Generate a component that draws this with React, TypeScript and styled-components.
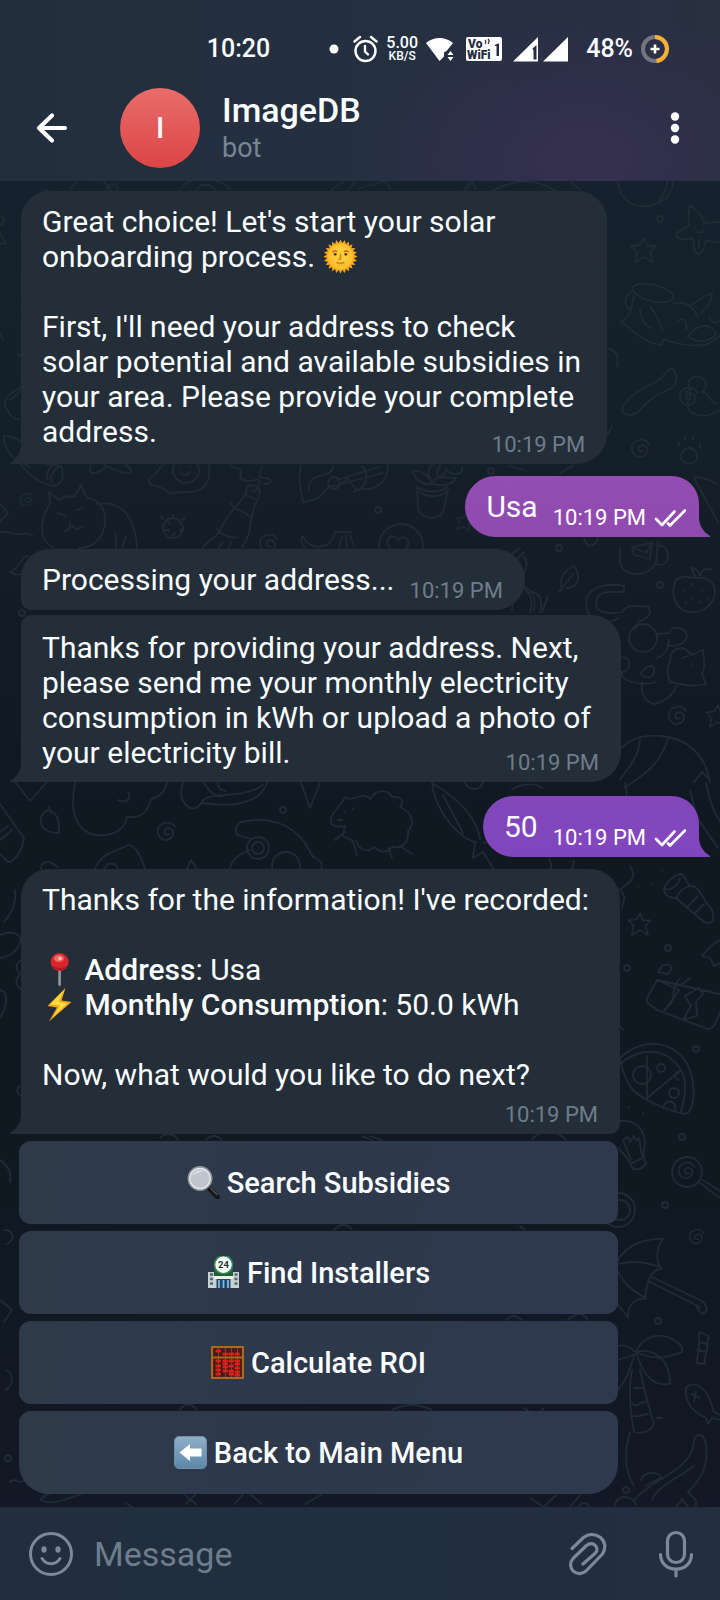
import React from 'react';
import styled, { createGlobalStyle, css } from 'styled-components';

const GlobalStyle = createGlobalStyle`
  * { box-sizing: border-box; }
  body {
    margin: 0;
    background: #111923;
    font-family: Roboto, "Liberation Sans", sans-serif;
    color: #fbfdff;
  }
  button, input { font: inherit; color: inherit; border: 0; background: none; padding: 0; margin: 0; }
  svg { display: block; }
`;

/* ---------- layout ---------- */

const Page = styled.div`
  min-height: 100vh;
  display: flex;
  flex-direction: column;
`;

const Header = styled.header`
  padding: 35px 35px 13px 35px;
  background:
    radial-gradient(230px 150px at 81% 88%, #37304f 0%, rgba(50, 47, 78, 0.75) 45%, rgba(44, 48, 70, 0) 100%),
    linear-gradient(90deg, #232e3c 0%, #243040 52%, #262f42 75%, #293040 100%);
`;

const StatusBar = styled.div`
  display: flex;
  align-items: center;
  justify-content: flex-end;
  height: 28px;
  padding-right: 16px;
  gap: 59px;
  font-size: 25px;
  line-height: 28px;
  font-weight: 500;
`;

const StatusIcons = styled.div`
  display: flex;
  align-items: center;
  gap: 18px;
`;

const StatusGroup = styled.div`
  display: flex;
  align-items: center;
  gap: 8px;
`;

const Speed = styled.div`
  display: flex;
  flex-direction: column;
  align-items: center;
  width: 32px;
  font-size: 16px;
  line-height: 14px;
  span { font-size: 12px; line-height: 12px; }
`;

const TitleRow = styled.div`
  display: flex;
  align-items: center;
  margin-top: 25px;
`;

const IconButton = styled.button`
  display: flex;
  cursor: pointer;
`;

const Avatar = styled.div`
  display: flex;
  align-items: center;
  justify-content: center;
  width: 80px;
  height: 80px;
  margin: 0 22px 0 51px;
  border-radius: 50%;
  background: linear-gradient(#e86d6b, #dd4545);
  font-size: 29px;
  font-weight: 500;
`;

const Title = styled.div`
  flex: 1;
  h1 { margin: 0; font-size: 34px; line-height: 40px; font-weight: 500; }
  p { margin: 0; font-size: 27px; line-height: 36px; color: #778595; }
`;

const Chat = styled.main`
  position: relative;
  flex: 1;
  display: flex;
  flex-direction: column;
  align-items: flex-start;
  padding: 10px 21px 13px 21px;
  overflow: hidden;
  background: linear-gradient(#15212c 0%, #131e29 25%, #101822 48%, #101922 75%, #121825 100%);
`;

const Wallpaper = styled.svg`
  position: absolute;
  inset: 0;
  width: 100%;
  height: 100%;
  fill: none;
  stroke: #202b36;
  stroke-width: 1.8;
  stroke-linecap: round;
  stroke-linejoin: round;
`;

type BubbleProps = {
  $out?: boolean;
  $color?: string;
  $corners: string;
  $gap?: number;
  $top?: number;
  $stamp: 'beside' | 'over' | 'below';
};

const Bubble = styled.div<BubbleProps>`
  position: relative;
  display: grid;
  grid-template-columns: ${p => (p.$stamp === 'beside' ? 'auto auto' : 'auto')};
  column-gap: 15px;
  width: fit-content;
  margin-top: ${p => p.$gap ?? 0}px;
  padding: ${p => p.$top ?? 13}px ${p => (p.$out ? 13 : 22)}px 6px 21px;
  border-radius: ${p => p.$corners};
  background: ${p => p.$color ?? '#232e39'};
  ${p => p.$out && css`align-self: flex-end;`}
`;

const Text = styled.p<{ $foot: number; $extra?: number }>`
  grid-area: 1 / 1;
  margin: 0;
  padding: 0 ${p => p.$extra ?? 0}px ${p => p.$foot}px 0;
  font-size: 30px;
  line-height: 35px;
  b { font-weight: 500; }
`;

const Stamp = styled.div<{ $out?: boolean; $stamp: 'beside' | 'over' | 'below' }>`
  grid-area: ${p => (p.$stamp === 'beside' ? '1 / 2' : p.$stamp === 'over' ? '1 / 1' : '2 / 1')};
  align-self: end;
  justify-self: end;
  display: flex;
  align-items: center;
  gap: 8px;
  font-size: 22px;
  line-height: 26px;
  color: ${p => (p.$out ? '#fff' : '#6f7d8a')};
`;

const Tail = styled.svg<{ $out?: boolean; $color?: string }>`
  position: absolute;
  bottom: 0;
  ${p => (p.$out ? 'left: 100%;' : 'right: 100%;')}
  width: 11px;
  height: 20px;
  fill: ${p => p.$color ?? '#232e39'};
  ${p => p.$out && css`transform: scaleX(-1);`}
`;

const Emoji = styled.svg<{ $size: number }>`
  display: inline-block;
  width: ${p => p.$size}px;
  height: ${p => p.$size}px;
  vertical-align: -7px;
`;

const LastMessage = styled.section`
  position: relative;
  width: fit-content;
  margin-top: 12px;
`;

const Keyboard = styled.div`
  display: flex;
  flex-direction: column;
  gap: 7px;
  margin: 7px 2px 0 -2px;
`;

const KeyButton = styled.button`
  display: flex;
  align-items: center;
  justify-content: center;
  gap: 7px;
  height: 83px;
  border-radius: 12px;
  background: linear-gradient(100deg, #2f3a49 0%, #2d394b 50%, #2e394d 100%);
  font-size: 29px;
  font-weight: 500;
  cursor: pointer;
  &:last-child { border-radius: 12px 12px 30px 30px; }
`;

const Composer = styled.form`
  display: flex;
  align-items: center;
  height: 93px;
  padding: 1px 26px 0 28px;
  background: linear-gradient(90deg, #222e3d 0%, #202e3f 40%, #232e3f 100%);
`;

const MessageInput = styled.input`
  flex: 1;
  min-width: 0;
  padding: 0 20px;
  outline: none;
  font-size: 34px;
  line-height: 40px;
  &::placeholder { color: #6e7d8d; opacity: 1; }
`;

const Tools = styled.div`
  display: flex;
  align-items: center;
  gap: 51px;
`;

/* ---------- icons ---------- */

const DotIcon = () => (
  <svg width="16" height="26" viewBox="0 0 16 26"><circle cx="5" cy="13" r="4.5" fill="#fff" /></svg>
);

const AlarmIcon = () => (
  <svg width="25" height="28" viewBox="0 0 25 28" fill="none" stroke="#fff" strokeWidth="2.4" strokeLinecap="round">
    <circle cx="12.5" cy="16" r="10" />
    <path d="M12 11v5.5l3 3M1.5 6.5l5.5-4.5M23.5 6.5L18 2" />
  </svg>
);

const WifiIcon = () => (
  <svg width="28" height="26" viewBox="0 0 28 26" fill="#fff">
    <path d="M0 7C4 3.5 9 2 13.5 2S23 3.500 27 7l-6 7.500-3 2v4L13.500 25z" />
    <path d="M24.500 15l3 4h-6zM24.500 25l3-4h-6z" />
  </svg>
);

const VoWifiIcon = () => (
  <svg width="40" height="26" viewBox="0 0 40 26" fontFamily="Roboto, sans-serif" fontWeight="900" fill="#262c40">
    <rect x="4" y="1" width="36" height="24" rx="2" fill="#fff" />
    <text x="6" y="12" fontSize="12">Vo</text>
    <text x="5" y="23" fontSize="12">WiFi</text>
    <path d="M23 8c1-1 1-3 0-4M26 8c1.500-2 1-4 0-5" fill="none" stroke="#262c40" strokeWidth="1.200" />
    <path d="M33 9l3-1.500h1V20h-2.500V10H33z" />
  </svg>
);

const SignalIcon = () => (
  <svg width="58" height="26" viewBox="0 0 58 26">
    <path d="M3 25.500L28 1v24.500zM33 25.500L58 1v24.500z" fill="#fff" />
    <path d="M22.500 12.500L26.500 9v14.500h-3V14.500z" fill="#262c40" />
  </svg>
);

const BatteryIcon = () => (
  <svg width="28" height="28" viewBox="0 0 28 28" fill="none" strokeWidth="4">
    <circle cx="14" cy="14" r="12" stroke="#73757f" />
    <path d="M14 2a12 12 0 0 1 1.500 23.900" stroke="#fbb034" />
    <path d="M14 9.500v9M9.500 14h9" stroke="#fff" strokeWidth="2.600" />
  </svg>
);

const BackIcon = () => (
  <svg width="34" height="32" viewBox="0 0 34 32" fill="none" stroke="#fff" strokeWidth="4.200" strokeLinecap="round" strokeLinejoin="round">
    <path d="M30 16H4M17 3.500L4 16l13 12.500" />
  </svg>
);

const MoreIcon = () => (
  <svg width="20" height="32" viewBox="0 0 20 32" fill="#fff">
    <circle cx="10" cy="4.500" r="4.200" /><circle cx="10" cy="16" r="4.200" /><circle cx="10" cy="27.500" r="4.200" />
  </svg>
);

const ChecksIcon = () => (
  <svg width="32" height="18" viewBox="0 0 32 18" fill="none" stroke="#fff" strokeWidth="2.600" strokeLinecap="round" strokeLinejoin="round">
    <path d="M2 10l6 6L20.500 2.500M14 14.500l2 2L31 1.500" />
  </svg>
);

const SmileIcon = () => (
  <svg width="46" height="46" viewBox="0 0 46 46" fill="none" stroke="#7b8998" strokeWidth="3" strokeLinecap="round">
    <circle cx="23" cy="23" r="20.500" />
    <path d="M14 27.500c4.500 7 13.500 7 18 0" />
    <ellipse cx="16" cy="18.500" rx="2.600" ry="3.200" fill="#7b8998" stroke="none" />
    <ellipse cx="30" cy="18.500" rx="2.600" ry="3.200" fill="#7b8998" stroke="none" />
  </svg>
);

const ClipIcon = () => (
  <svg width="38" height="44" viewBox="0 0 38 44" fill="none" stroke="#7b8998" strokeWidth="3.200" strokeLinecap="round" strokeLinejoin="round">
    <path d="M3 16.500L14.500 5.500C25-3 42 8 33.500 22L18 38C8 48-4 35 4.500 26L17.500 13.500C24 8 31 16 26.500 21L14 32" />
  </svg>
);

const MicIcon = () => (
  <svg width="36" height="48" viewBox="0 0 36 48" fill="none" stroke="#7b8998" strokeWidth="3.200" strokeLinecap="round">
    <rect x="9.500" y="2.500" width="17" height="30" rx="8.500" />
    <path d="M2.500 24.500c0 19.500 31 19.500 31 0M18 39.500V46" />
  </svg>
);

/* ---------- emoji ---------- */

const rays = Array.from({ length: 48 }, (_, i) => {
  const r = i % 2 ? 14 : 17.5;
  const a = (i * Math.PI) / 24;
  return `${(18 + r * Math.cos(a)).toFixed(1)},${(18 + r * Math.sin(a)).toFixed(1)}`;
}).join(' ');

const Sun = () => (
  <Emoji $size={35} viewBox="0 0 36 36" role="img" aria-label="sun with face">
    <polygon points={rays} fill="#f6a81c" />
    <circle cx="18" cy="18" r="13" fill="#fcc12d" />
    <circle cx="18" cy="16" r="9" fill="#fdcb3c" />
    <path d="M9.500 13.500q3-2 5-.5M21.500 13q3-1.500 5 .5" fill="none" stroke="#b8720c" strokeWidth="1.300" />
    <circle cx="12.500" cy="15.800" r="1.500" fill="#54340c" /><circle cx="23.500" cy="15.800" r="1.500" fill="#54340c" />
    <path d="M18 16v4.500l-1.800.5M14.500 24q3.500 2.500 7 0" fill="none" stroke="#d1800f" strokeWidth="1.500" strokeLinecap="round" />
  </Emoji>
);

const Pin = () => (
  <Emoji $size={35} viewBox="0 0 35 35" role="img" aria-label="pushpin">
    <path d="M16.300 14h2.600v19l-1.300 1.500L16.300 33z" fill="#94979c" />
    <circle cx="17.600" cy="10" r="9" fill="#d9252c" />
    <path d="M10 14a9 9 0 0 0 15.200 0q-7 4-15.200 0" fill="#ad161e" />
    <ellipse cx="17" cy="6.500" rx="5" ry="3.500" fill="#ef6a63" />
    <circle cx="18" cy="6.500" r="1.800" fill="#fbc3bb" />
  </Emoji>
);

const Bolt = () => (
  <Emoji $size={35} viewBox="0 0 35 35" role="img" aria-label="high voltage">
    <path d="M23.500 1L5.500 19l9.500 1.500L7 34.500l22.500-19.500-10-1.500z" fill="#f5a61d" />
    <path d="M22 3L8 17.500l10 1L11 30l14.500-14-9-1z" fill="#fddc3f" />
  </Emoji>
);

const Magnifier = () => (
  <Emoji $size={33} viewBox="0 0 33 33" aria-hidden="true">
    <path d="M20 20l3 3" stroke="#9b9fa3" strokeWidth="3.500" />
    <path d="M22.500 22.500l8 8.500" stroke="#17181b" strokeWidth="5" strokeLinecap="round" />
    <path d="M23 21.500l7.500 7.500" stroke="#53565b" strokeWidth="1.200" />
    <circle cx="13" cy="12.500" r="11.500" fill="#c9ced6" stroke="#8e949b" strokeWidth="2" />
    <circle cx="13" cy="12.500" r="10.200" fill="#bfc4cd" stroke="#e9ebee" strokeWidth="1.200" />
    <path d="M5 10q4-7 12-5Q9 7 5 10" fill="#dfe2e7" />
  </Emoji>
);

const Store = () => (
  <Emoji $size={33} viewBox="0 0 33 33" aria-hidden="true">
    <rect x="1" y="16" width="31" height="16" fill="#c9d0cf" />
    <rect x="7" y="14" width="19" height="6" fill="#215c38" />
    <rect x="7" y="20" width="19" height="3" fill="#eef0e8" />
    <path d="M3 18.500h3M3 23h3M3 27.500h3M27.500 18.500h3M27.500 23h3M27.500 27.500h3" stroke="#4f6b78" strokeWidth="2.500" />
    <rect x="9.500" y="23" width="14" height="9" fill="#1e4770" />
    <path d="M12 24v8M16.500 24v8M21 24v8" stroke="#86b7da" strokeWidth="1.800" />
    <circle cx="16.500" cy="8.800" r="9" fill="#fbfdfb" stroke="#2e8a50" strokeWidth="1.600" />
    <text x="16.500" y="12.200" fontSize="9.500" fontWeight="700" fontFamily="Roboto, sans-serif" textAnchor="middle" fill="#25332f">24</text>
  </Emoji>
);

const beads = [
  [5, 5], [12, 8], [18, 8], [24, 8],
  [5, 15], [5, 20], [5, 24], [5, 28], [12, 15], [12, 18], [12, 21], [12, 25], [18, 15], [18, 20], [18, 25], [18, 28],
  [24, 15], [24, 18], [24, 22], [24, 26], [24, 29],
];

const Abacus = () => (
  <Emoji $size={33} viewBox="0 0 33 33" aria-hidden="true">
    <rect x="1" y="1" width="31" height="31" fill="#4a1b12" stroke="#ad681f" strokeWidth="2.200" />
    <path d="M7.500 2v29M14.500 2v29M20.500 2v29M26.500 2v29" stroke="#6d4a3a" strokeWidth="1" />
    {beads.map(([x, y]) => <rect key={`${x}-${y}`} x={x - 0.5} y={y - 1.5} width="5.500" height="3" rx="1.200" fill="#d8201c" />)}
    <path d="M1 11.500h31" stroke="#ad681f" strokeWidth="2" />
  </Emoji>
);

const BackArrow = () => (
  <Emoji $size={33} viewBox="0 0 33 33" aria-hidden="true">
    <defs>
      <linearGradient id="tile" x1="0" y1="0" x2="0" y2="1">
        <stop offset="0" stopColor="#8fb0c8" /><stop offset="1" stopColor="#5c86a8" />
      </linearGradient>
    </defs>
    <rect x=".5" y=".5" width="32" height="32" rx="4.500" fill="url(#tile)" stroke="#6d8fa9" />
    <path d="M5.500 16.500l10.500-8.500v4.500h11.500v8H16V25z" fill="#fff" />
  </Emoji>
);

/* ---------- wallpaper doodles ---------- */

const At = ({ x, y, s = 1, r = 0, children }: { x: number; y: number; s?: number; r?: number; children: React.ReactNode }) => (
  <g transform={`translate(${x} ${y}) rotate(${r}) scale(${s})`}>{children}</g>
);

const spiral = 'M2 1c-3 2-6-1-4-4s8-2 8 3-6 9-11 6-6-12 0-15 11-1 13 3';
const star = 'M0-12l3 8 9 0-6 6 3 10-9-5-9 5 2-10-6-6 9-1z';
const leaf = 'M-9 12c-3-12 2-20 12-24 8 12 4 22-8 22M-12 14L2-4';

const spirals = [[641, 450, 1], [689, 398, 1], [27, 501, 0.7], [269, 545, 1], [167, 833, 1], [678, 717, 1], [697, 1238, 0.8]];
const stars = [[644, 250, 1, 0], [640, 924, 0.9, 0], [465, 522, 0.7, 10], [718, 716, 0.9, 0]];
const dots = [[660, 219], [378, 510], [559, 548], [660, 585], [283, 810], [668, 948], [627, 968], [696, 1049], [682, 1137], [665, 1205], [658, 1321], [626, 1490], [8, 1458], [22, 613], [491, 471]];

const Doodles = () => (
  <Wallpaper viewBox="0 181 720 1326" preserveAspectRatio="xMidYMin slice" aria-hidden="true">
    {spirals.map(([x, y, s]) => <At key={`s${x}-${y}`} x={x} y={y} s={s}><path d={spiral} /></At>)}
    {stars.map(([x, y, s, r]) => <At key={`t${x}`} x={x} y={y} s={s} r={r}><path d={star} /></At>)}
    {dots.map(([x, y]) => <circle key={`d${x}-${y}`} cx={x} cy={y} r="3" />)}

    {/* top edge */}
    <path d="M618 181c2 20 14 26 30 25 16-2 25-12 25-25M667 181c0 9-4 15-8 20" />
    <path d="M48 190l-4 0M77 181c-1 4-6 4-6 10M104 181l7 10M106 191c3-10 12-8 12 0M180 191c4-16 44-16 50 0M197 190c2-7 14-7 18 0M330 191l14-10M347 191l8-9M360 188l26-7 4 8M464 191l8-11 4 10M492 191q34-19 64 0M570 181l10 9" />
    {/* starfish */}
    <path d="M690 205c8 4 11 12 16 18 8-1 12-1 16-1M690 205c-3 8 0 16-1 21-6 3-12 5-13 10 5 5 12 3 17 2 1 8 1 16 5 16 6-1 6-8 8-14 6 2 10 3 14 2" />
    <path d="M694 227v.5M704 223v.5M697 232q4 2 7-2M699 240v8" />
    {/* fish in a hat */}
    <ellipse cx="653" cy="293" rx="21" ry="8" transform="rotate(14 653 293)" />
    <path d="M631 292c-9 6-6 14-1 18M634 296l-4 18-9 8c10 6 20 20 40 23l3-6c14 6 28 7 40 6 12-3 16-10 18-14M674 303c14-2 20 6 24 14M690 306c8-6 14-10 22-13 0 9-5 15-11 20M640 310c2 14 8 16 11 18M650 306q10 14 12 24M678 322c4-6 10-2 8 8M688 336c10-14 26-12 28-2-6 8-18 10-28 2M709 316c2 8 8 8 11 4" />
    {/* ribbon, duck, paw */}
    <path d="M624 404c-6 10 6 14 14 8 12-14 20-18 34-24 6-6 6-14 0-20-8 4-8 10-16 14-14 6-24 12-32 22z" />
    <path d="M690 390c-6-10 4-16 12-12 6 4 4 12 0 14 8 2 8 10 14 12M690 390l-5 2 6 3c-6 8-4 18 6 20 10 2 16-1 22-4M697 386v.5" />
    <At x={689} y={452}><path d="M-6 10c-5-6 0-14 6-14s11 8 6 14c-3 4-9 0-12 0zM-10-6v-3M-4-13v-3M4-13v-3M11-5v-3" /></At>
    <path d="M607 348c10 2 12 10 10 18M598 440c8-1 12-8 14-14" />
    {/* left margin near the first bubble */}
    <path d="M0 216c5 1 5 8 0 9M0 233l6 10-6 1M22 387c-16 8-22 16-14 24 2 6 10 10 14 8M0 334l3 6M18 355h4M22 390l-12 10" />
    <path d="M4 436c6 0 12 2 17 6M4 436c-1 10 6 20 12 23l14 8M20 463q14 20 34 23c10-2 10-12 7-20l-16-2M52 482c-4-6 4-14 8-16M48 479c-4-6 4-14 8-16" />
    {/* egg, leaves, smoke */}
    <path d="M91 466c-4 8 2 10 14 2M104 465c8 4 20 10 26 8 4-4-2-6-4-8M150 478c8-4 8-10 14-14M150 478c-6 10 14 6 20 16 8-4 30 2 36-10 4-6 4-14 3-20" />
    <circle cx="186" cy="470" r="13" /><path d="M181 467v.5M190 466v.5M181 473q5 5 9-1" />
    <path d="M231 466c4 4 12 0 10 8-4 6 6 8 14 6s4 8-2 12M262 466c0 8-8 10 2 12 10 0 8 6 0 6" />
    {/* bottle */}
    <path d="M247 487c4-4 12-1 13 4l-2 8c-10 14-4 34-16 48M247 487l-2 8c-6 10-20 20-25 36-6 8-12 10-18 17M231 503c4 10 12 4 18 14M217 529c4 6 14 10 20 8M245 495l10 4M219 548l3-5M229 548l2-5" />
    {/* sleeping cat */}
    <path d="M42 530c0-12 4-20 8-26l-1-12 10 8c6-4 10-4 16-4l6-11 6 13c14 2 18 12 18 22 0 16-10 28-26 28M97 504c24-4 38 12 40 44M42 530c0 10 6 14 12 18M64 531c4 0 8-3 6-8M73 525c0 4 4 5 9 2M58 513l8 3M76 510l7-2M115 533c2 6 0 12 1 15M126 536l-4 12" />
    <path d="M0 504l8 9-8 8M0 532c8-1 14 3 20 2s10 0 13 2M10 572c6-2 10-10 14-15l4-1M10 572q6 4 12 2" />
    <circle cx="173" cy="528" r="10" /><path d="M167 520l3 4M178 520l2 4M164 530h5M180 531l4-4M172 537l3-4M163 519l-2-2M183 520l2-3M173 518v-3" />
    {/* guitar */}
    <path d="M301 466c-4 14 0 22 2 36l10-2c10-2 10-14 22-14 6-1 10-4 12-8 6 6 8 14 12 12M309 490c-2-20 24-10 24-24M337 480l42-13M337 485l46-12M354 492c16-6 14-20 8-26" />
    <circle cx="334" cy="483" r="6" />
    {/* banana and curl */}
    <path d="M303 536c6 16 30 14 32-4h16M303 536c-4 4 0 10 2 12M342 536l-3 12M346 536l1 12M350 535l4 12" />
    {/* plant pot */}
    <path d="M417 487l1 22c4 12 24 12 26 0l4-20M417 490c8 8 24 8 30 1M417 487c8 6 24 6 30 0M432 484c-4-10-12-14-19-13 2 10 10 14 19 13zM432 484c4-10 14-6 24-6-4 8-14 8-24 6M430 478c-4-8 0-12 4-14M440 465c-8 14 4 14 6 4 6 8 18 6 16-2M362 489c16 2 26-10 26-24" />
    <circle cx="401" cy="546" r="22" /><path d="M390 548c-8-10 4-16 8-8 8-8 16 4 6 10" />
    <path d="M510 466l14 4M560 473l14-8M620 548v14c2 16 30 16 36 0l2-20M657 546c14-4 16 24-2 18M632 547l20-4-2 16-16-4zM632 547l14 6 6-10" />
    <path d="M520 548l-8 6M524 552l-10 10M584 538c2 12 12 8 14 0M716 484c-10-6-18-8-22-6l24 44" />
    <At x={571} y={578}><path d={leaf} /></At>
    <path d="M523 556c6 6 4 12 0 18" />
    {/* strawberry */}
    <path d="M676 580c8-6 14-2 20-2 10-2 20 4 19 16-3 14-16 20-26 18-16-2-18-22-13-32zM696 578l-5-10c6 0 8 4 9 8 2-8 8-8 12-6M684 590v1M692 584v1M692 598v1M702 590v1M700 602v1M686 602v1M708 598v1" />
    {/* lotus and pipe */}
    <path d="M512 610c0-14 6-22 10-24 8 6 12 16 8 26M522 586c12 4 14 14 12 24M530 592c12 0 12 10 10 20M548 596l-6 16" />
    <path d="M624 586c-20-4-38 2-38 18 0 18 22 22 32 14M624 586v6c-16 0-28-2-28 12 0 10 18 10 26 8M622 612c6-10 18-4 26-6 4 6 2 12-10 16l-3 8" />
    {/* tumbling cat */}
    <circle cx="643" cy="638" r="14" />
    <path d="M620 640c-6 2-6 8-2 14M657 634l12-1c2-8 16-6 18 2 0 10-14 12-20 10M669 640c0 10-6 16-12 18M684 648c-10 0-14 4-14 14-4 6-2 16 0 20 14 2 20 6 36 2l-4-10c4-6 2-18 1-24l-11 5zM620 658c12-4 12 14 2 14-2 10 20 14 34 10M642 672c6-8 14-8 12 0s-12 6-14 0M642 682c-2 12 4 20 12 22 10-2 20-10 22-18M682 658l6-2M692 664v.5" />
    <path d="M612 760c12-20 30-26 48-24 30 2 46 22 50 46M640 740c-2 20-14 30-20 40M668 738c-8 30-30 40-44 50M694 782l8-10 8 8" />
    {/* between third bubble and second reply */}
    <path d="M16 783l14 18 16-18M0 804l14 20 10 14c-2 14-10 24-16 24L0 854M0 832l8-6M0 840l12-10M75 783c-4 20-4 46 20 52 22 2 30-8 32-18 18 2 22-10 24-18 10-2 14-8 16-16M118 800c8 4 14-2 10-8" />
    <path d="M41 818c2-6 6-8 10-7 8 4 8 12 8 22-10 0-20-4-18-15zM49 807l2 6" />
    <path d="M183 783c-8 18 10 34 18 20 14 2 56 8 66-20M201 803c8-14 40-2 62-18M204 783c6 10 14 16 20 12M218 783c0 6 4 8 8 8M301 783l9 25 10-25" />
    <path d="M237 835c-4-8 2-14 10-14 20-4 44 2 58 22l8 14c8 2 10 8 8 12M237 835l14 4M250 850c-12 4-18 10-20 18" />
    <circle cx="258" cy="848" r="11" /><circle cx="258" cy="848" r="6" /><circle cx="286" cy="866" r="14" />
    <path d="M95 869c4-14 20-18 34-24 8 2 12 12 16 24M104 869c4-8 12-6 14 0M41 869c0-10 10-8 16-2M187 869l4-9 6 9" />
    {/* sheep */}
    <path d="M345 797c-4 10-16 16-14 26 2 4 10 4 14 3l-2 10 10 5 4 14M345 797l5 2c8-2 16-6 20 0 6-10 18-10 22-2 10-2 12 6 8 10 14 6 14 18 8 24 2 14-10 18-16 16-6 8-14 4-18 0-6 6-14 4-18-6M345 832l-10 8M400 846l12 8M388 848l4 10M345 812v1M353 810l1-2M338 820h4" />
    {/* brush and blanket */}
    <path d="M432 783c2 20 18 50 44 60M432 783c20 12 44 30 48 56M443 795l20 38M475 842l-2 16 10-6 10 16M484 843l10-4 2 8M512 790c6-6 24-8 30-2M465 783c4 8 14 8 18 0M549 859c4 6 2 12-2 14M574 861l-2 8M625 783c6 18-6 26-14 30M690 790c4 14 4 24 10 32l18 26M706 783c4 20 8 30 14 38M630 866c10 14-6 20-14 26" />
    {/* torch */}
    <path d="M664 888c4-8 12-14 18-14 4 4 4 8 8 12 10 0 10 10 22 24 4 14-2 14-8 12l-28-24c-8 0-12-4-12-10zM664 888c6 4 14-2 16-10M690 886c-8 2-12 8-14 12M698 896l-10 10M704 904l-9 9" />
    <path d="M638 886v.5M652 884v.5M662 870v.5M620 890c8 8 2 12 2 18" />
    {/* chocolate bar */}
    <path d="M647 998l10-18 63 14M647 998c-2 6 6 8 10 12l48 18c8 4 10-4 15-16M657 980l22 10-14 20M680 978c-14 18 2 18-16 32M682 984l8-6M699 988l-14 8 6 10-8 14 14-4-1-14 7-8zM672 968l-4 6-10-2 4-6c6-2 8-2 10 2zM720 940c-10 4-12 10-18 16l8 2 4 8 6-3" />
    {/* pizza */}
    <path d="M620 1058c30-28 70-12 73 26 2 16-2 30-8 30-12-2-40-12-52-24-8-10-12-24-13-32zM620 1064c28-24 60-10 65 18 1 14-2 20-4 30M647 1056v42M647 1098l34-28" />
    <circle cx="642" cy="1075" r="9" /><circle cx="661" cy="1068" r="4" /><circle cx="674" cy="1093" r="5" />
    <path d="M679 1080c-6-2-4-8 0-8M663 1108c2-10 14-8 12 2M620 1026l3 4M629 1107v.5M643 1113v.5" />
    {/* bulb */}
    <path d="M620 1121c14-2 24 8 25 20 0 8-3 12-1 18l2 4c-4 8-12 8-15 3-2-10-10-12-12-18M632 1163l13-6M623 1140l8 20M639 1138l3 18M623 1140l5-3 2 5 4-6 2 5 3-3" />
    <circle cx="687" cy="1172" r="15" /><path d="M700 1183l20 15M703 1180l17 11" />
    <At x={687} y={1172} s={0.9}><path d={spiral} /></At>
    <circle cx="618" cy="1210" r="17" /><circle cx="620" cy="1210" r="10" />
    {/* umbrella */}
    <path d="M618 1260c8-14 26-22 45-21-6 8-8 20-2 30-8 0-14 8-16 30-8-2-18 6-17 18-4-4-6-8-10-12M618 1264c16-4 30-2 44 4M618 1272c8 14 16 20 28 26M648 1281l52 26M652 1277l50 24c8 8 4 14-2 12l-4-8" />
    {/* candy */}
    <path d="M699 1332l10 4-2 8c2 6-4 12-2 20l-8-1c0-8 2-12 2-18zM699 1342l9 2M697 1350l9 2" />
    {/* palm */}
    <path d="M636 1352c6-14 20-20 34-14 8 4 14 8 12 14-14 6-30 8-46 0zM636 1352c14-4 34 4 34 32-14 2-26-4-34-32zM636 1352c-8-6-12-8-18-6M636 1354c-6 2-12 4-18 6M634 1356c-4 12-6 22-16 34M632 1370c-4 20-2 40 2 62 8 2 16 0 20-8-6-18-10-36-14-54M634 1388c6-2 4 2 8 0M631 1404c8 4 8-2 14-2M632 1416c8 2 10-2 16-2M656 1418h6" />
    {/* fish */}
    <path d="M686 1388c6-8 18-2 24 12l4 12 6 3M686 1388c-2 16 10 26 20 30l2 6 4-6 8 2M692 1394l8 4M696 1392l-2 10M630 1432c-6 20-6 38 4 54" />
    {/* crocodile */}
    <path d="M634 1500c18-22 60-30 60-60 2-6 10-8 12 4 2 20-2 32-18 48l8 8v7M652 1500c6-14 20-18 42-34M641 1480c2-8 18-10 20-2l-16 8M614 1507c4-16 20-10 22-2M676 1507l6-8 6 8" />
    {/* bottom edge and gaps between keys */}
    <path d="M530 1498l14 9 12-12M570 1507l10-12M578 1507q6-8 12 0M40 1500c12-14 28-4 48-8M40 1500c14 6 30-2 46-8M10 1482c6-6 8 4 14-2M185 1495l12 10M195 1495l-9 9M235 1504l8-10M250 1494l12 10M305 1504l16-9M126 1503l6 4" />
    <path d="M532 1140c8-12 26-10 34 0M160 1138c4-6 16-4 18 2M206 1140q8-8 16 0M362 1136l10 4M370 1136l12 4M520 1226l4 4M334 1230q10-10 18 0M506 1320q6-8 16 0M568 1320q12-12 20 0M524 1408q12 10 20 0M180 1410c4-8 14-6 16 0M392 1410q20-10 40 0" />
    {/* left margin, lower */}
    <path d="M15 890c2 14-4 24-11 32M0 935c14-6 22 0 20 8-4 10-12 14-20 15M22 960c-8 4-6 10-2 14-6 6-4 12 2 16M0 990c10 2 6 18 0 28M22 1085c-6 2-6 8-2 10M0 1160c8 6 12 12 10 22M4 1230c10 0 12 10 2 14M0 1300l12 10-8 12M6 1370c8 4 8 14 0 20" />
  </Wallpaper>
);

/* ---------- screen ---------- */

const BubbleTail = ({ out, color }: { out?: boolean; color?: string }) => (
  <Tail $out={out} $color={color} viewBox="0 0 11 20" aria-hidden="true">
    <path d="M11 0C11 8 7 15 0 19v1h11z" />
  </Tail>
);

const USA_COLOR = 'linear-gradient(#944db2, #8f4aaf)';
const FIFTY_COLOR = 'linear-gradient(#8347bb, #8145be)';

export default function App() {
  return (
    <>
      <GlobalStyle />
      <Page>
        <Header>
          <StatusBar>
            <time>10:20</time>
            <StatusIcons>
              <StatusGroup>
                <DotIcon />
                <AlarmIcon />
                <Speed>5.00<span>KB/S</span></Speed>
                <WifiIcon />
                <VoWifiIcon />
                <SignalIcon />
              </StatusGroup>
              <StatusGroup>
                48%
                <BatteryIcon />
              </StatusGroup>
            </StatusIcons>
          </StatusBar>
          <TitleRow>
            <IconButton aria-label="Back"><BackIcon /></IconButton>
            <Avatar>I</Avatar>
            <Title>
              <h1>ImageDB</h1>
              <p>bot</p>
            </Title>
            <IconButton aria-label="More options"><MoreIcon /></IconButton>
          </TitleRow>
        </Header>

        <Chat>
          <Doodles />

          <Bubble $stamp="over" $corners="28px 30px 30px 0">
            <Text $foot={9} $extra={4}>
              Great choice! Let's start your solar<br />
              onboarding process. <Sun /><br />
              <br />
              First, I'll need your address to check<br />
              solar potential and available subsidies in<br />
              your area. Please provide your complete<br />
              address.
            </Text>
            <Stamp $stamp="over">10:19 PM</Stamp>
            <BubbleTail />
          </Bubble>

          <Bubble $out $stamp="beside" $gap={12} $color={USA_COLOR} $corners="31px 28px 0 31px">
            <Text $foot={7}>Usa</Text>
            <Stamp $out $stamp="beside">10:19 PM <ChecksIcon /></Stamp>
            <BubbleTail out color="#8f4aaf" />
          </Bubble>

          <Bubble $stamp="beside" $gap={12} $corners="28px 30px 30px 10px">
            <Text $foot={7}>Processing your address...</Text>
            <Stamp $stamp="beside">10:19 PM</Stamp>
          </Bubble>

          <Bubble $stamp="over" $gap={5} $top={15} $corners="10px 30px 30px 0">
            <Text $foot={6} $extra={8}>
              Thanks for providing your address. Next,<br />
              please send me your monthly electricity<br />
              consumption in kWh or upload a photo of<br />
              your electricity bill.
            </Text>
            <Stamp $stamp="over">10:19 PM</Stamp>
            <BubbleTail />
          </Bubble>

          <Bubble $out $stamp="beside" $gap={14} $color={FIFTY_COLOR} $corners="31px 28px 0 31px">
            <Text $foot={7}>50</Text>
            <Stamp $out $stamp="beside">10:19 PM <ChecksIcon /></Stamp>
            <BubbleTail out color="#8145be" />
          </Bubble>

          <LastMessage>
            <Bubble $stamp="below" $corners="28px 30px 10px 0">
              <Text $foot={10} $extra={9}>
                Thanks for the information! I've recorded:<br />
                <br />
                <Pin /> <b>Address</b>: Usa<br />
                <Bolt /> <b>Monthly Consumption</b>: 50.0 kWh<br />
                <br />
                Now, what would you like to do next?
              </Text>
              <Stamp $stamp="below">10:19 PM</Stamp>
              <BubbleTail />
            </Bubble>
            <Keyboard>
              <KeyButton><Magnifier />Search Subsidies</KeyButton>
              <KeyButton><Store />Find Installers</KeyButton>
              <KeyButton><Abacus />Calculate ROI</KeyButton>
              <KeyButton><BackArrow />Back to Main Menu</KeyButton>
            </Keyboard>
          </LastMessage>
        </Chat>

        <Composer onSubmit={e => e.preventDefault()}>
          <IconButton type="button" aria-label="Emoji"><SmileIcon /></IconButton>
          <MessageInput placeholder="Message" aria-label="Message" />
          <Tools>
            <IconButton type="button" aria-label="Attach file"><ClipIcon /></IconButton>
            <IconButton type="button" aria-label="Record voice message"><MicIcon /></IconButton>
          </Tools>
        </Composer>
      </Page>
    </>
  );
}
